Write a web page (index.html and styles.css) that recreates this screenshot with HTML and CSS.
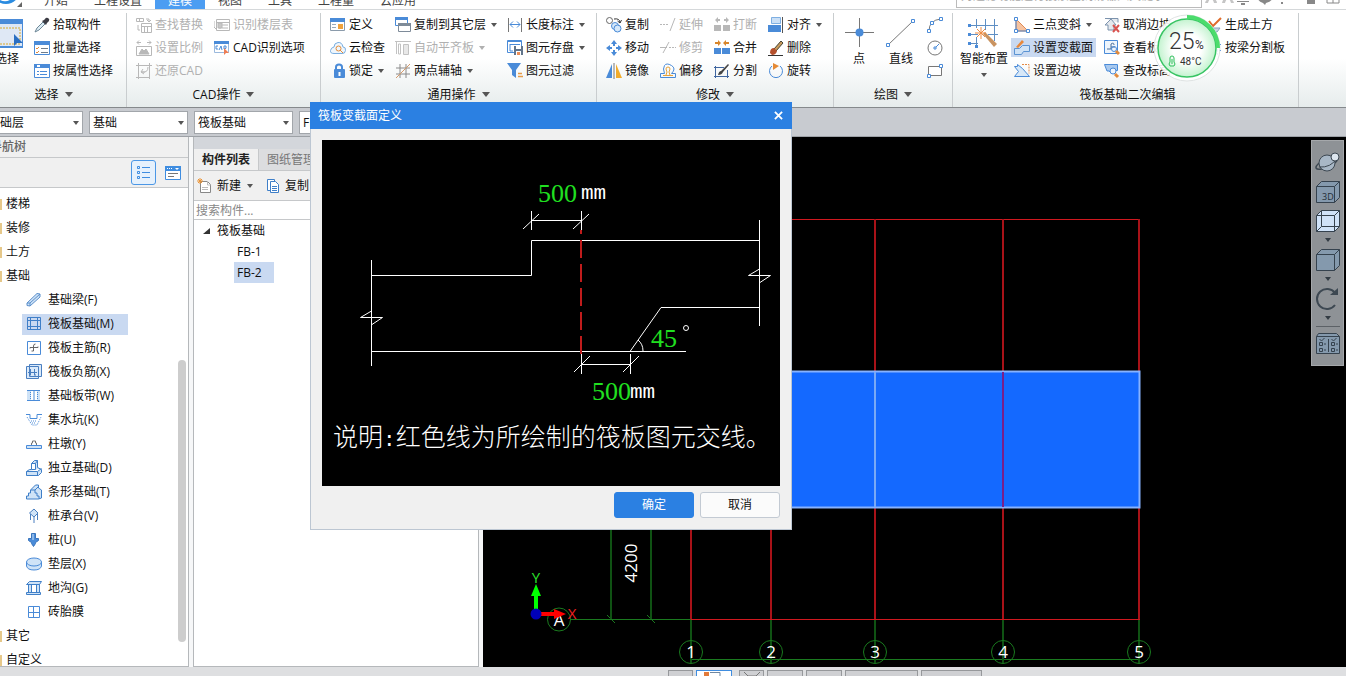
FILE: index.html
```html
<!DOCTYPE html>
<html lang="zh-CN">
<head>
  <meta charset="UTF-8">
  <title>筏板变截面定义</title>
  <link rel="stylesheet" href="styles.css">
</head>
<body>
  <header class="menu-bar">
    <svg class="logo" viewBox="0 0 31 10"><circle cx="6" cy="-9" r="14" fill="#2a8be0"/><path d="M0 0q6 3 11-1" stroke="#fff" stroke-width="2" fill="none"/><path d="M22 3v5h-5z" fill="#666"/></svg>
    <nav class="menu-tabs">
      <button>开始</button>
      <button>工程设置</button>
      <button class="active">建模</button>
      <button>视图</button>
      <button>工具</button>
      <button>工程量</button>
      <button>云应用</button>
    </nav>
    <input class="menu-search" type="text" aria-label="搜索" placeholder="对过滤功能进行搜索查找请输入关键字">
    <svg class="menu-icons" viewBox="0 0 144 10" fill="#888">
      <path d="M9 0a6 5 0 0 1 6 5h-3q-1-4-3-4t-3 4H3q1-4 6-5zM26 0q5 1 6 5h-3q-1-4-3-4t-3 4h-3q1-4 3-5" fill="#c5c5c5" transform="translate(0 -1)"/>
      <path d="M35 2h12v1H35zM39 4h4v2h-4zM56 0h14q-1 3-6 4l-1 2-2-2q-4-1-5-4zM79 0h2v1h-2zM79 3h2v2h-2zM87 0h2v1h-2zM105 0h8v5h-8z"/>
      <path d="M125 -4h12v8h-12zM131 0v4" fill="none" stroke="#888"/>
    </svg>
  </header>

  <div class="ribbon">
    <section class="group">
      <div class="tools">
        <button class="big-tool">
          <svg viewBox="0 0 32 32"><path d="M0 3h32v27H0z" fill="#dfe8f5" stroke="#4a8bd8" stroke-width="2"/><path d="M0 2h32v5H0z" fill="#4a8bd8"/><path d="M3 11h26v16H3z" fill="none" stroke="#d9a92c" stroke-dasharray="2 1"/><path d="M23 17l9 9h-6l-3 3z" fill="#2b6fc2"/></svg>
          选择
        </button>
        <div class="tool-col">
          <button class="tool"><svg viewBox="0 0 16 16"><path d="M1 15l2-4 6-6 2 2-6 6z" fill="#dcecf5" stroke="#6d8796"/><path d="M8 4l4 4 1-2 2-2q1-2-1-3t-3 1l-1 1z" fill="#3c3c44"/></svg>拾取构件</button>
          <button class="tool"><svg viewBox="0 0 16 16"><path d="M.5 1.5h15v13H.5z" fill="#fff" stroke="#4a8bd8"/><path d="M0 1h16v4H0z" fill="#4a8bd8"/><path d="M2 8l1 1 2-2M2 12l1 1 2-2" fill="none" stroke="#e28a3b"/><path d="M7 8.500h7M7 12.500h7" stroke="#6f7d8c"/></svg>批量选择</button>
          <button class="tool"><svg viewBox="0 0 16 16"><path d="M.5 1.500h15v13H.5z" fill="#fff" stroke="#4a8bd8"/><path d="M0 1h16v4H0z" fill="#4a8bd8"/><path d="M3 2h3v2H3z" fill="#fff"/><path d="M3 8.500h2M3 11.500h2M6 8.500h7M6 11.500h7" stroke="#4a8bd8"/></svg>按属性选择</button>
        </div>
      </div>
      <button class="group-name">选择<i class="caret"></i></button>
    </section>

    <section class="group group-cad">
      <div class="tools">
        <div class="tool-col">
          <button class="tool" disabled><svg viewBox="0 0 16 16" fill="none" stroke="#b8b8b8"><path d="M.5 1.500h7v3h-7zM3.500 1v3M10 2h3v3M11 3l2 2 2-2M5.500 6.500h10v9h-10zM8.500 9v6M11.500 9v6M5 9.500h10M2 8v5h2"/></svg>查找替换</button>
          <button class="tool" disabled><svg viewBox="0 0 16 16" fill="none" stroke="#b8b8b8"><path d="M1 2.500h4M1 2.500l2-2M1 2.500l2 2M11 2.500h4M15 2.500l-2-2M15 2.500l-2 2M.5 6.500h15v9H.5z"/><path d="M3 14l3-5 2 2 2-2 3 5z" fill="#b8b8b8"/></svg>设置比例</button>
          <button class="tool" disabled><svg viewBox="0 0 16 16" fill="none" stroke="#b8b8b8"><path d="M0 2.500h16M2.500 0v16M0 14.500h14M13.500 0v16M5 9h4M5 9l2-3M5 9l3 2M6 9q6 1 6-5"/></svg>还原CAD</button>
        </div>
        <div class="tool-col">
          <button class="tool" disabled><svg viewBox="0 0 16 16" fill="none" stroke="#b8b8b8"><path d="M2.500 2.500h13v11h-13zM3 5.500h12M0 4v6l2 2M5 8h2M5 11h2M8 8h6M8 11h6"/><path d="M4 6h4v5H4z" fill="#c8c8c8"/></svg>识别楼层表</button>
          <button class="tool"><svg viewBox="0 0 16 16"><path d="M.5 1.500h14v11H.5z" fill="#fff" stroke="#9bb9dd"/><path d="M0 1h15v3H0z" fill="#4a8bd8"/><path d="M4 6H2v3h2M5 10l2-4 1 4M10 6v3q3 0 2-3z" fill="none" stroke="#4a8bd8"/><path d="M10 8l5 5-3 0-2 2z" fill="#ee7d54"/></svg>CAD识别选项</button>
        </div>
      </div>
      <button class="group-name">CAD操作<i class="caret"></i></button>
    </section>

    <section class="group group-common">
      <div class="tools">
        <div class="tool-col">
          <button class="tool"><svg viewBox="0 0 16 16"><path d="M.5 1.500h14v12H.5z" fill="#fff" stroke="#8b9bab"/><path d="M0 1h15v4H0z" fill="#4a8bd8"/><path d="M8 7h5v5H8z" fill="#f0a23c"/><path d="M2 7.500h4M2 10.500h4" stroke="#9ab"/></svg>定义</button>
          <button class="tool"><svg viewBox="0 0 16 16"><path d="M4 13.500q-4 0-3.500-3T4 7q0-4 4-4.500T13 7q3 0 2.500 3.500T12 13.500z" fill="#eef6fd" stroke="#7aaee0"/><circle cx="8.500" cy="8.500" r="2.500" fill="none" stroke="#e48b37"/><path d="M10 10l3 3" stroke="#e48b37"/></svg>云检查</button>
          <button class="tool"><svg viewBox="0 0 16 16"><path d="M6 7V4q0-2.500 3-2.500T12 4v3" fill="none" stroke="#4a8bd8" stroke-width="2"/><rect x="4" y="6" width="11" height="9" rx="1" fill="#4a8bd8"/><path d="M9.500 9v4" stroke="#fff" stroke-width="2"/></svg>锁定<i class="caret"></i></button>
        </div>
        <div class="tool-col">
          <button class="tool"><svg viewBox="0 0 16 16"><path d="M.5.5h12v8H.5z" fill="#fff" stroke="#4a8bd8"/><path d="M0 0h13v3H0z" fill="#4a8bd8"/><path d="M3.500 6.500h12v8h-12z" fill="#fff" stroke="#7e8b99"/><path d="M3 6h13v3H3z" fill="#7e8b99"/></svg>复制到其它层<i class="caret"></i></button>
          <button class="tool" disabled><svg viewBox="0 0 16 16" fill="none" stroke="#c2c2c2"><path d="M0 1.500h16M1.500 2v12M3.500 4v10h2v-10z"/><path d="M8.500 4.500h5v10h-5z" fill="#e8e8e8"/></svg>自动平齐板<i class="caret"></i></button>
          <button class="tool"><svg viewBox="0 0 16 16" fill="none" stroke="#8a8a8a"><path d="M5 1v14M11 1v14M1 5h14M1 11h14"/><path d="M1 15L15 1" stroke="#d59a6a"/></svg>两点辅轴<i class="caret"></i></button>
        </div>
        <div class="tool-col">
          <button class="tool"><svg viewBox="0 0 16 16" fill="none" stroke="#4a8bd8"><path d="M1.500 1v14M14.500 1v14" stroke="#777"/><path d="M3 7.500h10M6 4.500l-3 3 3 3M10 4.500l3 3-3 3"/></svg>长度标注<i class="caret"></i></button>
          <button class="tool"><svg viewBox="0 0 16 16"><path d="M.5.5h14v12H.5z" fill="#fff" stroke="#4a8bd8"/><path d="M0 1.500h15M3 4.500h10M3 4v7h3" fill="none" stroke="#4a8bd8"/><path d="M7 6h9v9H7z" fill="#60748b"/><path d="M9 6h5v3H9zM9 11h5v4H9z" fill="#fff"/><path d="M10 12h3v3h-3z" fill="#ec8d55"/></svg>图元存盘<i class="caret"></i></button>
          <button class="tool"><svg viewBox="0 0 16 16"><path d="M0 0h14L9 7v8l-4-3V7z" fill="#4a8bd8"/><path d="M11 10.500h4M11 13.500h5" stroke="#e69b48" stroke-width="1.500"/></svg>图元过滤</button>
        </div>
      </div>
      <button class="group-name">通用操作<i class="caret"></i></button>
    </section>

    <section class="group group-edit">
      <div class="tools">
        <div class="tool-col">
          <button class="tool"><svg viewBox="0 0 16 16" fill="none"><circle cx="3.500" cy="3.500" r="3" stroke="#666"/><circle cx="9" cy="9" r="3.500" fill="#d5e8fa" stroke="#4a8bd8"/><circle cx="11.500" cy="11.500" r="3.500" fill="#d5e8fa" stroke="#4a8bd8"/><path d="M8 2q6-1 6 4M11.500 4l2.500 2 1.500-3" stroke="#333"/></svg>复制</button>
          <button class="tool"><svg viewBox="0 0 16 16" fill="#4a8bd8"><path d="M8 0l3 4H9v2H7V4H5zM8 16l3-4H9v-2H7v2H5zM0 8l4-3v2h2v2H4v2zM16 8l-4-3v2h-2v2h2v2z"/></svg>移动</button>
          <button class="tool"><svg viewBox="0 0 16 16"><path d="M6 1v14H0z" fill="#4a8bd8"/><path d="M10 1v14h6z" fill="#f2ac2b"/><path d="M8 0v16" stroke="#777"/></svg>镜像</button>
        </div>
        <div class="tool-col">
          <button class="tool" disabled><svg viewBox="0 0 16 16" fill="none" stroke="#b8b8b8"><path d="M0 7.500h9" stroke-dasharray="2 1"/><path d="M10 14l5-13"/></svg>延伸</button>
          <button class="tool" disabled><svg viewBox="0 0 16 16" fill="none" stroke="#b8b8b8"><path d="M0 7.500h7M3 13L9 2"/><path d="M9 7.500h7" stroke-dasharray="2 1"/></svg>修剪</button>
          <button class="tool"><svg viewBox="0 0 16 16" fill="none"><path d="M.5 14.500v-4h4q-2-5 0-8t7 0 0 8h4v4z" stroke="#4a8bd8"/><path d="M3 12.500h10M6 12q2-3 0-6 0-2 2-2t2 2q-2 3 0 6" stroke="#e8a33a"/></svg>偏移</button>
        </div>
        <div class="tool-col">
          <button class="tool" disabled><svg viewBox="0 0 16 16" fill="#b8b8b8"><path d="M0 8h7v6H0zM9 8h7v6H9zM1 3l3-3v2h2v2H4v2zM15 3l-3-3v2h-2v2h2v2z"/></svg>打断</button>
          <button class="tool"><svg viewBox="0 0 16 16"><path d="M0 8h7v6H0zM8 8h8v6H8z" fill="#4a8bd8"/><path d="M7 3L4 0v2H1v2h3v2zM9 3l3-3v2h3v2h-3v2z" fill="#d8862b"/></svg>合并</button>
          <button class="tool"><svg viewBox="0 0 16 16" fill="none"><path d="M0 4.500h10M1.500 3v12M0 13.500h15M13.500 7v8" stroke="#3f66a0"/><path d="M4 12q1-4 3-4l7-7 1 1-6 7q-1 3-5 3z" fill="#444"/></svg>分割</button>
        </div>
        <div class="tool-col">
          <button class="tool"><svg viewBox="0 0 16 16"><path d="M3.500.5h9v6h-9z" fill="#cbe0f6" stroke="#7eafe2"/><path d="M0 8h13v7H0z" fill="#4a8bd8"/><path d="M14.500 0v16" stroke="#555"/></svg>对齐<i class="caret"></i></button>
          <button class="tool"><svg viewBox="0 0 16 16"><path d="M6 9l7-8 2 2-7 8z" fill="#c99a5c" stroke="#443"/><path d="M2 13q0-5 4-5l3 3q-1 4-5 4z" fill="#b5502d"/><path d="M0 15.500h15" stroke="#333"/></svg>删除</button>
          <button class="tool"><svg viewBox="0 0 16 16"><path d="M4 3a6.500 6.500 0 1 0 8 0" fill="none" stroke="#4a8bd8"/><path d="M5 0l6 3-6 4z" fill="#e58a35"/></svg>旋转</button>
        </div>
      </div>
      <button class="group-name">修改<i class="caret"></i></button>
    </section>

    <section class="group group-draw">
      <div class="tools">
        <button class="big-tool"><svg viewBox="0 0 32 32"><path d="M16.500 1v29M2 15.500h29" stroke="#777"/><circle cx="16.500" cy="15.500" r="4" fill="#4a8bd8"/></svg>点</button>
        <button class="big-tool"><svg viewBox="0 0 32 32" fill="#fff"><path d="M3 28L28 4" stroke="#777"/><path d="M1.500 26.500h3v3h-3zM26.500 2.500h3v3h-3z" stroke="#4a8bd8"/></svg>直线</button>
        <div class="tool-col">
          <button class="tool" aria-label="弧线"><svg viewBox="0 0 16 16" fill="#fff"><path d="M2 14Q2 3 14 2" fill="none" stroke="#777"/><path d="M.5 12.500h3v3h-3zM3.500 4.500h3v3h-3zM12.500.5h3v3h-3z" stroke="#4a8bd8"/></svg></button>
          <button class="tool" aria-label="圆"><svg viewBox="0 0 16 16" fill="#fff"><circle cx="8" cy="8" r="7" stroke="#777"/><path d="M8 8l4-4" stroke="#4a8bd8"/><path d="M7 7h2v2h-2z" stroke="#4a8bd8"/></svg></button>
          <button class="tool" aria-label="矩形"><svg viewBox="0 0 16 16" fill="#fff"><path d="M1.500 3.500h13v9h-13z" stroke="#777"/><path d="M.5 11.500h3v3h-3zM12.500 1.500h3v3h-3z" stroke="#4a8bd8"/></svg></button>
        </div>
      </div>
      <button class="group-name">绘图<i class="caret"></i></button>
    </section>

    <section class="group group-raft">
      <div class="tools">
        <button class="big-tool"><svg viewBox="0 0 32 32" fill="none"><path d="M1 8.500h29M1 17.500h9M20 17.500h10M1 26.500h9M8.500 2v9M8.500 20v10M17.500 2v11M26.500 2v22" stroke="#5f8fc4"/><path d="M0 7h3v3H0zM0 16h3v3H0zM0 25h3v3H0zM7 28h3v3H7z" fill="#4a8bd8"/><path d="M15 17l11 13 3-3-12-12z" fill="#c99360"/><path d="M7 16h11M13 10v12M9 12l8 8M17 12l-8 8" stroke="#ee8b41"/></svg>智能布置<i class="caret"></i></button>
        <div class="tool-col">
          <button class="tool"><svg viewBox="0 0 16 16"><path d="M2 2v12h12z" fill="#f6c3a0" stroke="#e18a55"/><path d="M2 2v12h12" fill="none" stroke="#4a8bd8"/><path d="M.5.5h3v3h-3zM.5 12.500h3v3h-3zM12.500 12.500h3v3h-3z" fill="#fff" stroke="#4a8bd8"/></svg>三点变斜<i class="caret"></i></button>
          <button class="tool selected"><svg viewBox="0 0 16 16"><path d="M.5 14.500v-6h5l3-3h7v6h-6l-2 3z" fill="#cfe2f6" stroke="#5b93d3"/><path d="M2 7l6-7 2 2-6 6z" fill="#e8883b"/></svg>设置变截面</button>
          <button class="tool"><svg viewBox="0 0 16 16" fill="none"><path d="M.5 3.500h3v-2l5 4 7 8H.5l4-5z" fill="#d7e8f8" stroke="#4a8bd8"/><path d="M8 1.500h7v9" stroke="#e58a45" stroke-dasharray="2 1"/></svg>设置边坡</button>
        </div>
        <div class="tool-col">
          <button class="tool"><svg viewBox="0 0 16 16" fill="none"><path d="M1 1.500h13v4M1 8l6-6 5 6h-2v5H4V8z" fill="#e4e8ed" stroke="#7c93ad"/><path d="M9 8l6 7M15 8l-6 7" stroke="#d9534f" stroke-width="2"/></svg>取消边坡</button>
          <button class="tool"><svg viewBox="0 0 16 16" fill="none"><path d="M.5.5h13v13H.5z" fill="#eef5fc" stroke="#4a8bd8"/><path d="M3 9h4V4q3-2 3 1M7 7h4" stroke="#4a6f9a"/><circle cx="10" cy="9" r="2.500" stroke="#4a8bd8"/><path d="M12 11l3 3" stroke="#e28a3b" stroke-width="3"/></svg>查看板内钢筋</button>
          <button class="tool"><svg viewBox="0 0 16 16" fill="none"><path d="M.5 1.500h13v6h-3L8 11 5 8H3z" fill="#a9c9ee" stroke="#4a8bd8"/><circle cx="9" cy="8" r="3" fill="#eef5fc" stroke="#4a8bd8"/><path d="M11 11l3 3" stroke="#e28a3b" stroke-width="3"/></svg>查改标高</button>
        </div>
        <div class="tool-col">
          <button class="tool"><svg viewBox="0 0 16 16" fill="none"><path d="M3 4l4 5 8-8" stroke="#df6c2c" stroke-width="2"/><path d="M4 11h10l-3 4H4z" fill="#c8d5e2" stroke="#86a0bb"/></svg>生成土方</button>
          <button class="tool"><svg viewBox="0 0 16 16" fill="none"><path d="M1 4.500h14M1 10.500h14M5.500 1v14M11.500 1v14" stroke="#4a8bd8" stroke-dasharray="3 1"/></svg>按梁分割板</button>
        </div>
      </div>
      <button class="group-name">筏板基础二次编辑</button>
    </section>

    <svg class="monitor" viewBox="0 0 68 68">
      <defs>
        <radialGradient id="glow"><stop offset=".5" stop-color="#fff"/><stop offset="1" stop-color="#c3f3cf"/></radialGradient>
      </defs>
      <circle cx="34" cy="34" r="33" fill="#fff" fill-opacity=".9" stroke="#dfe3e3"/>
      <circle cx="34" cy="34" r="29" fill="url(#glow)" stroke="#37c463" stroke-width="1.500"/>
      <path d="M34 3a31 31 0 0 1 31 31" fill="none" stroke="#4bdc6c" stroke-width="4"/>
      <text x="16" y="35" font-size="23" font-weight="300">25</text>
      <text x="42" y="35" font-size="12">%</text>
      <path d="M17 44q0-2 2-2t2 2v4q2 2 0 4h-4q-2-2 0-4zM19 45v5" fill="none" stroke="#2fbf5c"/>
      <text x="27" y="51" font-size="10">48°C</text>
    </svg>
  </div>

  <div class="filter-bar">
    <select aria-label="楼层"><option>基础层</option></select>
    <select aria-label="构件大类"><option>基础</option></select>
    <select aria-label="构件类型"><option>筏板基础</option></select>
    <select aria-label="构件"><option>FB-2</option></select>
  </div>

  <main class="workspace">
    <aside class="nav-panel">
      <h2>导航树</h2>
      <div class="view-switch">
        <button class="on" aria-label="列表"><svg viewBox="0 0 16 16" fill="none" stroke="#3f8de0"><path d="M1.500 1.500h2v2h-2zM1.500 6.500h2v2h-2zM1.500 11.500h2v2h-2zM6 2.500h8M6 7.500h8M6 12.500h8"/></svg></button>
        <button aria-label="卡片"><svg viewBox="0 0 16 16"><path d="M.5 1.500h15v13H.5z" fill="#fff" stroke="#3f8de0"/><path d="M0 1h16v5H0z" fill="#3f8de0"/><path d="M2 3.500h6" stroke="#fff" stroke-dasharray="1 1"/><path d="M10 3h4l-2 2z" fill="#fff"/><path d="M3 8.500h10M3 11.500h6" stroke="#777"/></svg></button>
      </div>
      <div class="nav-body">
        <ul class="nav-tree">
          <li><i class="folder"></i>楼梯</li>
          <li><i class="folder"></i>装修</li>
          <li><i class="folder"></i>土方</li>
          <li><i class="folder"></i>基础</li>
          <li class="leaf"><a href="#"><svg viewBox="0 0 16 16"><path d="M1 11L11 1.500l3 .5v3L4 14l-3-.5zM1 11l3 0v3M4 11L14 2" fill="#cfe3f7" stroke="#5b8fcb"/></svg>基础梁(F)</a></li>
          <li class="leaf current"><a href="#"><svg viewBox="0 0 16 16" fill="none" stroke="#3f7fc8"><path d="M1.500 1.500h13v12h-13zM4.500 4.500h7v6h-7zM1 4.500h14M1 10.500h14M4.500 1v13M11.500 1v13"/></svg>筏板基础(M)</a></li>
          <li class="leaf"><a href="#"><svg viewBox="0 0 16 16" fill="#fff" stroke="#4a8bd8"><path d="M1.500 1.500h13v13h-13z"/><path d="M4 7.500h8M7.500 11V6q0-2 2-2M4 7.500v1M12 7.500v-1M7.500 11h-2" fill="none" stroke="#666"/></svg>筏板主筋(R)</a></li>
          <li class="leaf"><a href="#"><svg viewBox="0 0 16 16" fill="#dbeafa" stroke="#4a7fc0"><path d="M3.500.5h12v12h-12zM.5 2.500h12v12H.5z"/><path d="M4.500 5v6M8.500 5v6M2 8.500h9M3 11h2M8 11h2" fill="none"/></svg>筏板负筋(X)</a></li>
          <li class="leaf"><a href="#"><svg viewBox="0 0 16 16" fill="none" stroke="#4a8bd8"><path d="M1 2h4v11H1zM11 2h3v11h-3z" fill="#cfe3f7" stroke="none"/><path d="M1 2.500h13M1 12.500h13M8 2v11"/><path d="M4.500 2v11M11.500 2v11" stroke-dasharray="1 1"/></svg>基础板带(W)</a></li>
          <li class="leaf"><a href="#"><svg viewBox="0 0 16 16" fill="none" stroke="#4a8bd8"><path d="M0 2.500h4v4h7v-4h5"/><path d="M1 5l5 8h5l4-8M5 9h6M6 11h4" stroke-dasharray="1 1"/></svg>集水坑(K)</a></li>
          <li class="leaf"><a href="#"><svg viewBox="0 0 16 16" fill="#cfe3f7" stroke="#4a8bd8"><path d="M.5 9.500h15v3H.5z"/><path d="M5.500 9V7h1V5h3v2h1v2" stroke="#777" fill="#fff"/></svg>柱墩(Y)</a></li>
          <li class="leaf"><a href="#"><svg viewBox="0 0 16 16" fill="#cfe3f7" stroke="#3f7fc8"><path d="M.5 11.500l3-2h2v-6l3-3h3v7l4 2v3l-3 3H.5zM5.500 9.500h4v-6h-4M9.500 3.500l2-3M.5 11.500h11l4-3M11.500 12v3"/></svg>独立基础(D)</a></li>
          <li class="leaf"><a href="#"><svg viewBox="0 0 16 16" fill="#cfe3f7" stroke="#3f7fc8"><path d="M.5 15v-3h2V9h2V6l5-5h3v3l3 2v8l-3 1zM5 6h4v3h2v3h2v3M9 6l4-4"/></svg>条形基础(T)</a></li>
          <li class="leaf"><a href="#"><svg viewBox="0 0 16 16" fill="#cfe3f7" stroke="#4a7fc0"><path d="M4.500 6v6M8 9v6M11.500 6v6M3.500 5L8 1l4 4-4 4z"/></svg>桩承台(V)</a></li>
          <li class="leaf"><a href="#"><svg viewBox="0 0 16 16" fill="#4a8bd8" stroke="#3a75bd"><path d="M5.500 1.500h4v5h3v2l-3 2v1l-2 3-2-3v-1l-3-2v-2h3z"/><path d="M7 2v6" stroke="#cfe3f7"/></svg>桩(U)</a></li>
          <li class="leaf"><a href="#"><svg viewBox="0 0 16 16" fill="#cfe3f7" stroke="#4a8bd8"><path d="M.5 6v4q1 4 7.500 4t7.500-4V6"/><ellipse cx="8" cy="6" rx="7.500" ry="4"/></svg>垫层(X)</a></li>
          <li class="leaf"><a href="#"><svg viewBox="0 0 16 16" fill="#cfe3f7" stroke="#3f7fc8"><path d="M.5 4.500l3-3h12l-2 3zM2.500 4.500h3v8h-3zM10.500 4.500h3v8h-3zM.5 12.500h14v2H.5z"/></svg>地沟(G)</a></li>
          <li class="leaf"><a href="#"><svg viewBox="0 0 16 16" fill="#fff" stroke="#4a8bd8"><path d="M2.500 2.500h11v11h-11zM7.500 2v11M2 8.500h11"/></svg>砖胎膜</a></li>
          <li><i class="folder"></i>其它</li>
          <li><i class="folder"></i>自定义</li>
        </ul>
        <div class="scroll-track"><span class="scroll-thumb"></span></div>
      </div>
    </aside>

    <aside class="list-panel">
      <div class="list-tabs">
        <button class="active">构件列表</button>
        <button>图纸管理</button>
      </div>
      <div class="list-actions">
        <button><svg viewBox="0 0 16 16"><path d="M3.500 3.500h7l3 3v8h-10z" fill="#fff" stroke="#888"/><path d="M10.500 3v4h3M5 9.500h6M5 11.500h6" fill="none" stroke="#bbb"/><path d="M0 3h6M3 0v6M1 1l4 4M5 1L1 5" stroke="#eb9436"/></svg>新建<i class="caret"></i></button>
        <button><svg viewBox="0 0 16 16" fill="#fff" stroke="#3f7fc8"><path d="M2.500 1.500h7v11h-7z"/><path d="M5.500 3.500h5l3 3v8h-8zM7 8.500h5M7 10.500h5M7 12.500h5"/></svg>复制</button>
      </div>
      <input class="list-search" type="text" aria-label="搜索构件" placeholder="搜索构件...">
      <ul class="list-tree">
        <li><svg viewBox="0 0 8 8"><path d="M7 1v6H0z" fill="#333"/></svg>筏板基础</li>
        <li class="item"><a href="#">FB-1</a></li>
        <li class="item current"><a href="#">FB-2</a></li>
      </ul>
    </aside>

    <section class="canvas">
      <svg class="model" viewBox="483 137 863 530" preserveAspectRatio="xMinYMin slice">
        <g class="axis-red">
          <path d="M691 219.500h449M691 619.500h449"/>
          <path class="upright" d="M691 219v400M771 219v400M875 219v400M1003 219v400M1139 219v400"/>
        </g>
        <g class="axis-green">
          <path d="M570 619.500h121M607 615l8 8M647 615l8 8M691 659.500h448"/>
          <path class="upright" d="M611 219v400M651 219v400M691 620v43M771 620v43M875 620v43M1003 620v43M1139 620v43"/>
          <circle cx="559" cy="619.500" r="11.500"/>
          <circle cx="691" cy="652" r="11.500"/>
          <circle cx="771" cy="652" r="11.500"/>
          <circle cx="875" cy="652" r="11.500"/>
          <circle cx="1003" cy="652" r="11.500"/>
          <circle cx="1139" cy="652" r="11.500"/>
        </g>
        <rect x="691" y="371.500" width="448.500" height="136" fill="#1469ff" stroke="#86b2ff" stroke-width="2"/>
        <path d="M875 372v135" stroke="#79a9f5" stroke-width="2"/>
        <path d="M1003 372v135" stroke="#7a1f8a" stroke-width="2"/>
        <g class="axis-label">
          <text x="559" y="626">A</text>
          <text x="691" y="658">1</text>
          <text x="771" y="658">2</text>
          <text x="875" y="658">3</text>
          <text x="1003" y="658">4</text>
          <text x="1139" y="658">5</text>
          <text transform="translate(637 563) rotate(-90)">4200</text>
        </g>
        <g class="ucs">
          <path d="M536 614v-20" stroke="#0f0" stroke-width="4"/><path d="M531 596l5-12 5 12z" fill="#0f0"/>
          <path d="M536 614h20" stroke="#f00" stroke-width="4"/><path d="M554 609l12 5-12 5z" fill="#f00"/>
          <circle cx="536" cy="614" r="5.500" fill="#0000b8"/>
          <text x="536" y="583" fill="#2be02b">Y</text>
          <text x="572" y="619" fill="#f02020">X</text>
        </g>
      </svg>
      <div class="view-tools">
        <button aria-label="动态观察"><svg viewBox="0 0 26 26"><ellipse cx="12" cy="13" rx="12" ry="4" transform="rotate(-25 12 13)" fill="none" stroke="#3d4852" stroke-width="1.500"/><circle cx="12" cy="13" r="8" fill="#a8b7c6" stroke="#3d4852"/><path d="M4 17q12 1 18-9" fill="none" stroke="#3d4852"/><circle cx="20" cy="7" r="4" fill="#dce5ee" stroke="#3d4852"/></svg></button>
        <button aria-label="三维"><svg viewBox="0 0 26 26" class="cube"><path d="M1.500 7.500l5-5h18v16l-5 5h-18zM1.500 7.500h18v16M19.500 7.500l5-5"/><text x="7" y="21">3D</text></svg></button>
        <button aria-label="线框"><svg viewBox="0 0 26 26" class="cube"><path d="M1.500 7.500l5-5h18v16l-5 5h-18z" fill="#cfe2f8"/><path d="M1.500 7.500h18v16M19.500 7.500l5-5M6.500 2.500v16h18M6.500 18.500l-5 5" fill="none"/></svg></button>
        <i class="caret"></i>
        <button aria-label="视图"><svg viewBox="0 0 26 26" class="cube"><path d="M1.500 7.500l5-5h18v16l-5 5h-18zM1.500 7.500h18v16M19.500 7.500l5-5"/></svg></button>
        <i class="caret"></i>
        <button aria-label="旋转"><svg viewBox="0 0 26 26"><path d="M20 19A10 10 0 1 1 20 7" fill="none" stroke="#3d4852" stroke-width="2"/><path d="M15 9h8V2z" fill="#3d4852"/></svg></button>
        <i class="caret"></i>
        <hr>
        <button aria-label="显示设置"><svg viewBox="0 0 26 26" class="cube"><path d="M1.500 6.500l2-3h18l3 3v17h-23zM1.500 6.500h23"/><path d="M4.500 9l2 2 3-3M16.500 9l2 2 3-3M4.500 12.500h3v3h-3zM4.500 18.500h3v3h-3zM16.500 12.500h3v3h-3zM16.500 18.500h3v3h-3zM9 14h2M9 20h2M21 14h2M21 20h2M13.500 9v13" fill="none"/></svg></button>
      </div>
    </section>
  </main>

  <footer class="status-bar">
    <button class="w-sm" aria-label="状态 1"></button>
    <button class="w-md on" aria-label="状态 2"><svg viewBox="0 0 20 6"><path d="M0 1h5v5H0z" fill="#e27a3a"/><path d="M6 1.500h10v4" fill="none" stroke="#6f87a0"/></svg></button>
    <button class="w-sm" aria-label="状态 3"><svg viewBox="0 0 20 6"><path d="M2 1l4 4M18 1l-4 4M6 5h8" fill="none" stroke="#777"/></svg></button>
    <button class="w-md" aria-label="状态 4"></button>
    <button class="w-md" aria-label="状态 5"></button>
    <button class="w-xl" aria-label="状态 6"></button>
    <button class="w-lg" aria-label="状态 7"></button>
  </footer>

  <div class="dialog" role="dialog" aria-labelledby="dialog-title">
    <div class="dialog-title">
      <span id="dialog-title">筏板变截面定义</span>
      <button aria-label="关闭"><svg viewBox="0 0 10 10"><path d="M1 1l8 8M9 1L1 9" stroke="#fff" stroke-width="2"/></svg></button>
    </div>
    <div class="dialog-body">
      <svg class="section-drawing" viewBox="322 140 458 346">
        <g class="outline">
          <path d="M371.500 260v106M371 275.500h160.500v-35H760M759.500 220v106M371 351.500h315M759 307.500h-98l-31 44"/>
          <path d="M371.500 311l-11 6.500h22l-10.500 7M759.500 269l-11 6.500h22l-10.500 7"/>
          <path d="M531.500 211v19M581.500 211v19M531 220.500h50M523 229l16-15M573 229l16-15"/>
          <path d="M581.500 354v20M630.500 354v20M581 364.500h49M574 372l16-16M623 372l16-16"/>
          <path d="M638 340q5 4 5 11"/>
          <circle cx="686" cy="328" r="2.500"/>
        </g>
        <path d="M581 230v124" stroke="#c01c1c" stroke-width="2" stroke-dasharray="18 6" stroke-dashoffset="14"/>
        <g class="value">
          <text x="538" y="202">500</text>
          <text x="592" y="400">500</text>
          <text x="651" y="347">45</text>
        </g>
        <g class="unit">
          <text x="581" y="199">mm</text>
          <text x="630" y="398">mm</text>
        </g>
        <text class="note" x="333" y="446">说明<tspan class="colon">:</tspan>红色线为所绘制的筏板图元交线。</text>
      </svg>
      <div class="dialog-buttons">
        <button class="primary">确定</button>
        <button>取消</button>
      </div>
    </div>
  </div>
</body>
</html>
```
FILE: styles.css
```css
* {
  box-sizing: border-box;
}

body {
  margin: 0;
  height: 100vh;
  display: flex;
  flex-direction: column;
  overflow: hidden;
  background: #dedfe1;
  color: #111;
  font-family: "Open Sans", "Noto Sans CJK SC", sans-serif;
  font-size: 12px;
  line-height: 18px;
}

button, input, select {
  font: inherit;
  color: inherit;
}

button {
  padding: 0;
  border: 0;
  background: none;
  white-space: nowrap;
}

ul {
  margin: 0;
  padding: 0;
  list-style: none;
}

a {
  color: inherit;
  text-decoration: none;
}

svg {
  flex: none;
}

.caret {
  flex: none;
  width: 0;
  height: 0;
  margin-left: 2px;
  border: 3px solid transparent;
  border-top: 4px solid #555;
  border-bottom: 0;
}

/* menu bar */

.menu-bar {
  flex: none;
  height: 10px;
  display: flex;
  align-items: flex-end;
  overflow: hidden;
  background: #fff;
  border-bottom: 1px solid #d5d8da;
}

.logo {
  width: 31px;
  height: 10px;
}

.menu-tabs {
  display: flex;
}

.menu-tabs button {
  height: 17px;
  padding: 0 13px;
  line-height: 17px;
  color: #444;
}

.menu-tabs .active {
  background: #4c9df2;
  color: #fff;
}

.menu-search {
  width: 246px;
  height: 22px;
  margin: 0 0 1px auto;
  padding: 0 4px 4px;
  border: 1px solid #bbb;
}

.menu-search::placeholder {
  color: #aaa;
}

.menu-icons {
  width: 144px;
  height: 10px;
}

/* ribbon */

.ribbon {
  position: relative;
  flex: none;
  display: flex;
  margin-left: -19px;
  padding-top: 3px;
  background: linear-gradient(#fff 50%, #e6ecec);
  border-bottom: 1px solid #85898c;
}

.group {
  display: flex;
  flex-direction: column;
  padding: 0 6px;
  border-right: 1px solid #c9cdcf;
}

.tools {
  flex: 1;
  display: flex;
  gap: 5px;
}

.tool-col {
  display: flex;
  flex-direction: column;
  align-items: flex-start;
}

.tool {
  height: 19px;
  margin: 2px 0;
  padding: 0 3px;
  display: flex;
  align-items: center;
  gap: 3px;
}

.tool svg {
  width: 16px;
  height: 16px;
}

.tool:disabled {
  color: #b0b0b0;
}

.tool:disabled .caret {
  border-top-color: #b0b0b0;
}

.tool.selected {
  background: #c9d9f1;
}

.big-tool {
  display: flex;
  flex-direction: column;
  align-items: center;
  padding: 3px 3px 0;
}

.big-tool svg {
  width: 32px;
  height: 34px;
}

.big-tool .caret {
  margin: 5px 0 0;
}

.group-name {
  height: 25px;
  display: flex;
  align-items: center;
  justify-content: center;
  gap: 4px;
}

.group-name .caret {
  border-width: 5px 4px 0;
}

.group:first-child {
  width: 146px;
  padding: 0 7px;
}

.group-cad {
  width: 194px;
}

.group-common {
  width: 276px;
}

.group-common .tools {
  gap: 4px;
}

.group-edit {
  width: 237px;
}

.group-draw {
  width: 119px;
}

.group-draw .tools {
  gap: 4px;
}

.group-raft {
  width: 346px;
  padding: 0 0 0 4px;
}

.group-raft .tools {
  gap: 0;
}

.group-raft .tool-col {
  margin-right: 5px;
}

.monitor {
  position: absolute;
  left: 1172px;
  top: 4px;
  width: 68px;
  height: 68px;
  font-family: Roboto, sans-serif;
  fill: #333;
}

/* floor and component filters */

.filter-bar {
  flex: none;
  display: flex;
  gap: 6px;
  margin-left: -19px;
  padding: 3px 3px 2px;
  background: #c8cbd0;
  border-bottom: 1px solid #9da1a6;
}

.filter-bar select {
  appearance: none;
  width: 99px;
  height: 23px;
  padding: 0 3px;
  border: 1px solid #a2a6ab;
  border-radius: 0;
  background: #fff url("data:image/svg+xml,%3Csvg xmlns='http://www.w3.org/2000/svg' width='6' height='4'%3E%3Cpath d='M0 0h6L3 4z' fill='%23555'/%3E%3C/svg%3E") no-repeat right 3px center;
}

/* workspace */

.workspace {
  flex: 1;
  min-height: 0;
  display: flex;
  gap: 4px;
  background: #f6f7f8;
}

.nav-panel {
  width: 189px;
  display: flex;
  flex-direction: column;
  background: #fff;
  border-right: 1px solid #b5b8bb;
  border-bottom: 1px solid #b5b8bb;
}

.nav-panel h2 {
  margin: 0;
  height: 21px;
  padding-left: 0;
  text-indent: -10px;
  font-size: 12px;
  font-weight: 500;
  line-height: 20px;
  color: #666;
  background: #f0f0f0;
  border-bottom: 1px solid #c6c8ca;
}

.view-switch {
  display: flex;
  justify-content: flex-end;
  gap: 4px;
  height: 30px;
  padding: 2px 3px;
  background: #f0f0f0;
  border-bottom: 1px solid #c6c8ca;
}

.view-switch button {
  width: 25px;
  height: 25px;
  display: flex;
  align-items: center;
  justify-content: center;
  border: 1px solid transparent;
  border-radius: 3px;
}

.view-switch .on {
  border-color: #4b97e6;
  background: #e6f1fc;
}

.view-switch svg {
  width: 16px;
  height: 16px;
}

.nav-body {
  flex: 1;
  min-height: 0;
  display: flex;
  overflow: hidden;
}

.nav-tree {
  flex: 1;
  padding-top: 4px;
}

.nav-tree li {
  height: 24px;
  display: flex;
  align-items: center;
  gap: 4px;
}

.nav-tree .leaf {
  padding-left: 22px;
}

.nav-tree a {
  height: 21px;
  display: flex;
  align-items: center;
  gap: 6px;
  padding: 0 14px 0 4px;
}

.nav-tree .current a,
.list-tree .current a {
  background: #c9d9f1;
}

.nav-tree svg {
  width: 16px;
  height: 16px;
}

.folder {
  width: 2px;
  height: 11px;
  background: #e6c88a;
}

.scroll-track {
  width: 10px;
  display: grid;
  grid-template-rows: 172fr 282fr 24fr;
}

.scroll-thumb {
  grid-row: 2;
  width: 8px;
  border-radius: 4px;
  background: #cdcdcd;
}

.list-panel {
  width: 286px;
  display: flex;
  flex-direction: column;
  background: #fff;
  border: 1px solid #b5b8bb;
  border-top: 0;
}

.list-tabs {
  display: flex;
  padding-top: 12px;
  background: #d3d6db;
}

.list-tabs button {
  height: 22px;
  padding: 0 8px;
  color: #777;
  background: #dcdddf;
  border-right: 1px solid #c6c8ca;
  border-bottom: 1px solid #c6c8ca;
}

.list-tabs .active {
  color: #222;
  font-weight: bold;
  background: #f0f0f0;
}

.list-actions {
  display: flex;
  gap: 12px;
  height: 30px;
  padding: 0 3px;
  background: #f0f0f0;
  border-bottom: 1px solid #c6c8ca;
}

.list-actions button {
  display: flex;
  align-items: center;
  gap: 4px;
}

.list-actions svg {
  width: 16px;
  height: 16px;
}

.list-search {
  height: 19px;
  padding: 0 2px;
  border: 0;
  border-bottom: 1px solid #c6c8ca;
}

.list-search::placeholder {
  color: #888;
}

.list-tree li {
  height: 21px;
  display: flex;
  align-items: center;
  gap: 6px;
  padding-left: 9px;
}

.list-tree svg {
  width: 8px;
  height: 8px;
}

.list-tree .item {
  padding-left: 40px;
}

.list-tree a {
  padding: 2px 12px 1px 3px;
}

.canvas {
  position: relative;
  flex: 1;
  min-width: 0;
  background: #000;
}

.model {
  display: block;
  width: 100%;
  height: 100%;
}

.axis-red {
  fill: none;
  stroke: #d0181f;
}

.axis-green {
  fill: none;
  stroke: #1a7a1f;
}

.upright {
  stroke-width: 2;
}

.axis-red .upright {
  stroke: #a81218;
}

.axis-green .upright {
  stroke: #0f5213;
}

.axis-label {
  fill: #fff;
  font-size: 17px;
  text-anchor: middle;
}

.ucs {
  font-size: 15px;
  text-anchor: middle;
}

.view-tools {
  position: absolute;
  top: 3px;
  right: 2px;
  width: 33px;
  display: flex;
  flex-direction: column;
  align-items: center;
  padding: 7px 0 8px;
  background: #8e9296;
  border: 1px solid #a5a8ab;
}

.view-tools button {
  height: 29px;
  display: flex;
  align-items: center;
}

.view-tools svg {
  width: 26px;
  height: 26px;
}

.view-tools .caret {
  margin: 3px 0;
  border-top-color: #333c44;
}

.view-tools hr {
  width: 24px;
  margin: 3px 0 1px;
  border: 0;
  border-top: 1px solid #5c6166;
}

.cube {
  fill: #8499ad;
  stroke: #35424e;
}

.cube text {
  fill: #222c35;
  stroke: none;
  font-size: 9px;
}

/* status bar */

.status-bar {
  flex: none;
  height: 9px;
  display: flex;
  align-items: flex-start;
  gap: 3px;
  padding: 3px 0 0 668px;
  overflow: hidden;
}

.status-bar button {
  height: 20px;
  display: flex;
  justify-content: center;
  background: #cfd0d3;
  border: 1px solid #96989b;
}

.status-bar .on {
  margin-right: 4px;
  background: #fff;
  border-color: #3f8de0;
}

.status-bar svg {
  width: 20px;
  height: 6px;
}

.w-sm {
  width: 25px;
}

.w-md {
  width: 36px;
}

.w-lg {
  width: 61px;
}

.w-xl {
  width: 73px;
}

/* dialog */

.dialog {
  position: absolute;
  left: 310px;
  top: 102px;
  width: 482px;
  background: #f0f0f0;
}

.dialog-title {
  height: 27px;
  display: flex;
  align-items: center;
  justify-content: space-between;
  padding: 0 9px 0 8px;
  color: #fff;
  background: #2b80e2;
}

.dialog-title svg {
  display: block;
  width: 9px;
  height: 9px;
}

.dialog-body {
  padding: 11px;
  border: 1px solid #bcc6d2;
  border-top: 0;
}

.section-drawing {
  display: block;
  width: 100%;
  background: #000;
}

.outline {
  fill: none;
  stroke: #fff;
}

.value {
  fill: #20e020;
  font-family: "Liberation Serif", serif;
  font-size: 26px;
}

.unit,
.colon {
  fill: #fff;
  font-family: "Liberation Mono", monospace;
  font-size: 21px;
}

.note {
  fill: #fff;
  font-family: "Noto Sans CJK SC", sans-serif;
  font-size: 25px;
  font-weight: 300;
}

.dialog-buttons {
  display: flex;
  justify-content: flex-end;
  gap: 6px;
  margin-top: 6px;
}

.dialog-buttons button {
  width: 80px;
  height: 26px;
  border: 1px solid #c3cad3;
  border-radius: 3px;
  background: #fbfbfb;
}

.dialog-buttons .primary {
  border-color: #2b80e2;
  background: #2b80e2;
  color: #fff;
}
```
